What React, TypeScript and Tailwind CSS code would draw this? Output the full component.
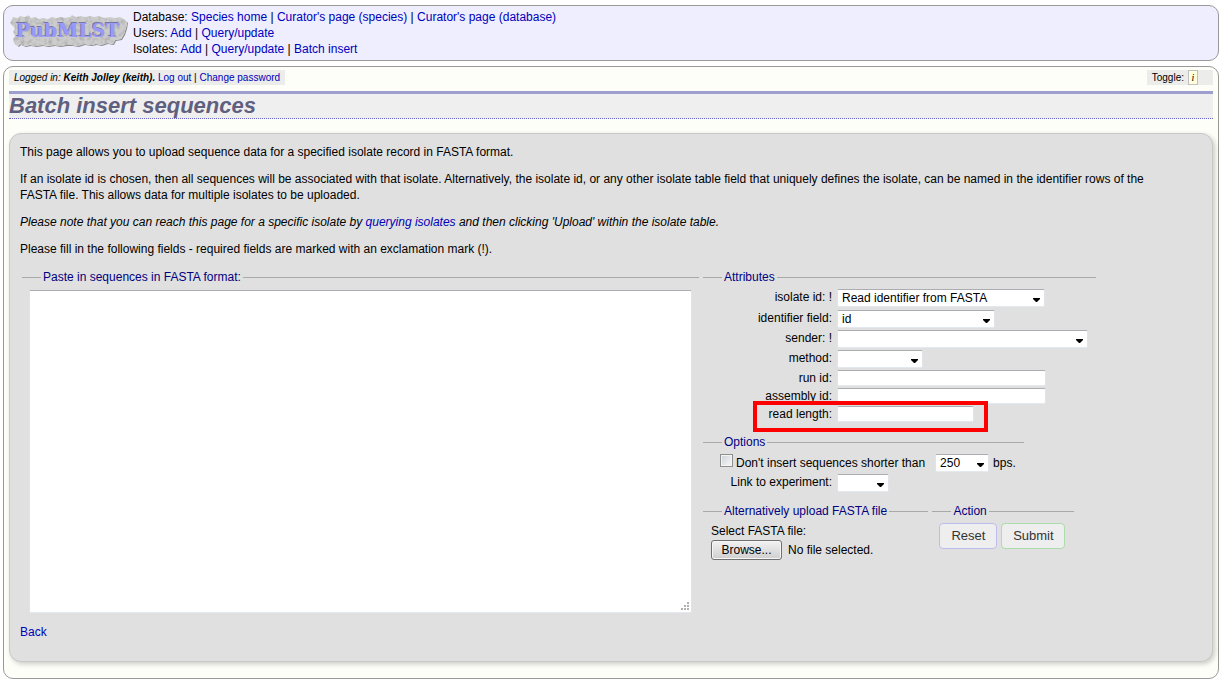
import { useRef } from "react";
import type { ReactNode } from "react";

function A({ children }: { children: ReactNode }) {
  return (
    <a href="#" className="text-[#0000bb] hover:underline">
      {children}
    </a>
  );
}

const stoneShape =
  "M1 10L4 4l5 1 2-2 5 1 3-2 2 3 5-1 4 2 4-1 5 1 4-2 4 1 5-1 4 1 5-1 2-2 4 2 5-1 4 1 5-1 4 1 5-1 5 2 6-1 5 1 5-1 4 2 3 3-1 6-2 6-3 5-6 1-2 4-6-1-6 2-5-1-5 1-7-1-6 2-6-1-6 0-6 1-6-1-6 1-6-1-6 1-6-1-5 1-5-2-2 2-4-3-1-4 2-3-2-4 2-4z";

function Logo() {
  return (
    <svg width="120" height="34" viewBox="0 0 120 34" role="img" aria-label="PubMLST" className="shrink-0">
      <defs>
        <filter id="stone" x="-5%" y="-10%" width="110%" height="120%" colorInterpolationFilters="sRGB">
          <feTurbulence type="fractalNoise" baseFrequency="0.25" numOctaves="2" seed="4" result="n" />
          <feColorMatrix in="n" type="matrix" values="0.35 0 0 0 0.8  0.35 0 0 0 0.8  0.35 0 0 0 0.8  0 0 0 0 1" result="g" />
          <feComposite in="g" in2="SourceGraphic" operator="in" result="t" />
          <feBlend in="t" in2="SourceGraphic" mode="multiply" />
        </filter>
      </defs>
      <path d={stoneShape} fill="#8c8c8c" transform="translate(1 1)" />
      <path d={stoneShape} fill="#cccccc" filter="url(#stone)" />
      <g fontFamily="'DejaVu Serif', serif" fontWeight="bold" fontSize="19">
        <text x="6" y="23" fill="#7777a0">PubMLST</text>
        <text x="7" y="24" fill="#9999f8">PubMLST</text>
      </g>
    </svg>
  );
}

const inset = "rounded-[2px] border border-t-[#abadb3] border-x-[#e2e3ea] border-b-[#e3e9ef] bg-white";

function Select({ id, label, width, options }: { id: string; label?: string; width: string; options: string[] }) {
  return (
    <span className={`relative inline-block h-[18px] ${width}`}>
      <select id={id} aria-label={label} className={`block h-full w-full appearance-none pl-1 pr-4 leading-4 ${inset}`}>
        {options.map((o) => (
          <option key={o}>{o}</option>
        ))}
      </select>
      <svg width="7" height="4" viewBox="0 0 7 4" className="pointer-events-none absolute bottom-[5px] right-[5px]" aria-hidden="true">
        <path d="M0 0h7v1L4 4H3L0 1z" fill="#000" />
      </svg>
    </span>
  );
}

function Fieldset({ title, children }: { title: string; children: ReactNode }) {
  return (
    <fieldset className="w-fit border-t border-[#a9a9a9]">
      <legend className="ml-[19px] px-0.5 leading-4 text-[#000080]">{title}</legend>
      {children}
    </fieldset>
  );
}

function Row({ id, label, children }: { id: string; label: string; children: ReactNode }) {
  return (
    <div className="flex gap-[5px]">
      <label htmlFor={id} className="w-[129px] shrink-0 text-right leading-4">
        {label}
      </label>
      {children}
    </div>
  );
}

export default function App() {
  const file = useRef<HTMLInputElement>(null);
  return (
    <div className="bg-white px-[3px] pb-px pt-[5px] font-['Liberation_Sans',Arial,sans-serif] text-[12px] leading-4 text-black">
      <header className="flex gap-1 rounded-[10px] border border-[#999999] bg-[#eeeeff] px-[5px] py-[3px]">
        <div className="pt-1">
          <Logo />
        </div>
        <nav>
          <div>
            Database: <A>Species home</A> | <A>Curator's page (species)</A> | <A>Curator's page (database)</A>
          </div>
          <div>
            Users: <A>Add</A> | <A>Query/update</A>
          </div>
          <div>
            Isolates: <A>Add</A> | <A>Query/update</A> | <A>Batch insert</A>
          </div>
        </nav>
      </header>

      <main className="mt-[5px] rounded-[10px] border border-[#999999] bg-[#fdfef8] px-[5px] pb-4 pt-[3px]">
        <div className="flex justify-between text-[10px] leading-[15px]">
          <div className="bg-[#ececea] px-[5px]">
            <i>
              Logged in: <b>Keith Jolley (keith).</b>
            </i>{" "}
            <A>Log out</A> | <A>Change password</A>
          </div>
          <div className="flex gap-1 bg-[#ececea] pl-[5px] pr-[15px]">
            Toggle:
            <button
              type="button"
              aria-label="Toggle information"
              className="h-[15px] w-[10px] border border-[#c0c0c0] bg-[#ffffdd] text-center font-['Liberation_Serif',serif] text-[10px] italic leading-3"
            >
              i
            </button>
          </div>
        </div>

        <h1 className="mt-[6px] border-t-[3px] border-b border-t-[#9f9fcf] border-b-[#6666cc] bg-[#efefef] text-[22px] font-bold italic leading-6 text-[#5f5f80] [border-bottom-style:dotted]">
          Batch insert sequences
        </h1>

        <section className="mt-[14px] rounded-[12px] border border-[#c8c8c8] bg-[#e0e0e0] px-[10px] pb-[21px] pt-[10px] shadow-[2px_2px_5px_rgba(0,0,0,0.2)]">
          <div className="flex flex-col gap-[11px] pr-7">
            <p>This page allows you to upload sequence data for a specified isolate record in FASTA format.</p>
            <p>
              If an isolate id is chosen, then all sequences will be associated with that isolate. Alternatively, the
              isolate id, or any other isolate table field that uniquely defines the isolate, can be named in the
              identifier rows of the FASTA file. This allows data for multiple isolates to be uploaded.
            </p>
            <p className="italic">
              Please note that you can reach this page for a specific isolate by <A>querying isolates</A> and then
              clicking 'Upload' within the isolate table.
            </p>
            <p>Please fill in the following fields - required fields are marked with an exclamation mark (!).</p>
          </div>

          <form className="ml-0.5 mt-3 flex items-start gap-1" onSubmit={(e) => e.preventDefault()}>
            <Fieldset title="Paste in sequences in FASTA format:">
              <div className="px-[7px] pt-[5px]">
                <div className="relative">
                  <textarea
                    aria-label="Paste in sequences in FASTA format"
                    className={`block h-[323px] w-[663px] resize-none ${inset}`}
                  />
                  <svg width="8" height="8" viewBox="0 0 8 8" className="pointer-events-none absolute bottom-[3px] right-[3px]" aria-hidden="true">
                    <path d="M6 0h2v2H6zM3 3h2v2H3zM6 3h2v2H6zM0 6h2v2H0zM3 6h2v2H3zM6 6h2v2H6z" fill="#b4b0ac" />
                  </svg>
                </div>
              </div>
            </Fieldset>

            <div>
              <Fieldset title="Attributes">
                <div className="flex flex-col gap-0.5 pr-2 pt-1">
                  <div className="pb-px">
                    <Row id="isolate" label="isolate id: !">
                      <Select id="isolate" width="w-[208px]" options={["Read identifier from FASTA"]} />
                    </Row>
                  </div>
                  <Row id="field" label="identifier field:">
                    <Select id="field" width="w-[158px]" options={["id"]} />
                  </Row>
                  <Row id="sender" label="sender: !">
                    <Select id="sender" width="w-[251px]" options={[""]} />
                  </Row>
                  <Row id="method" label="method:">
                    <Select id="method" width="w-[86px]" options={[""]} />
                  </Row>
                  <Row id="run" label="run id:">
                    <input id="run" type="text" className={`h-4 w-[209px] px-1 ${inset}`} />
                  </Row>
                  <Row id="assembly" label="assembly id:">
                    <input id="assembly" type="text" className={`h-4 w-[209px] px-1 ${inset}`} />
                  </Row>
                  <div className="relative">
                    <Row id="length" label="read length:">
                      <input id="length" type="text" className={`h-4 w-[137px] px-1 ${inset}`} />
                    </Row>
                    <div className="pointer-events-none absolute -top-[5px] left-[50px] h-[31px] w-[235px] border-4 border-[#ff0000]" />
                  </div>
                </div>
              </Fieldset>

              <div className="mt-3">
                <Fieldset title="Options">
                  <div className="flex items-center pl-[17px] pr-2 pt-1">
                    <input
                      id="short"
                      type="checkbox"
                      className="mb-[5px] mr-[3px] h-[13px] w-[13px] appearance-none border border-[#8e8f8f] bg-gradient-to-br from-[#cfd3d8] to-[#f8f8f8] shadow-[inset_0_0_0_1px_#f4f4f4]"
                    />
                    <label htmlFor="short" className="mr-[10px]">
                      Don't insert sequences shorter than
                    </label>
                    <Select id="bps" label="Minimum length" width="w-[54px]" options={["250"]} />
                    <span className="ml-1">bps.</span>
                  </div>
                  <div className="mt-0.5">
                    <Row id="experiment" label="Link to experiment:">
                      <Select id="experiment" width="w-[52px]" options={[""]} />
                    </Row>
                  </div>
                </Fieldset>
              </div>

              <div className="mt-[11px] flex items-start gap-1">
                <Fieldset title="Alternatively upload FASTA file">
                  <div className="pl-2 pr-[55px] pt-1">
                    <label htmlFor="upload" className="block">
                      Select FASTA file:
                    </label>
                    <input id="upload" ref={file} type="file" className="hidden" />
                    <div className="mt-px flex items-center gap-[6px] whitespace-nowrap">
                      <button
                        type="button"
                        onClick={() => file.current?.click()}
                        className="h-5 w-[71px] rounded-[3px] border border-[#707070] bg-gradient-to-b from-[#f2f2f2] to-[#cfcfcf] leading-4 shadow-[inset_0_0_0_1px_#f6f6f6]"
                      >
                        Browse...
                      </button>
                      <span>No file selected.</span>
                    </div>
                  </div>
                </Fieldset>
                <Fieldset title="Action">
                  <div className="flex gap-1 pl-[7px] pr-[9px] pt-1">
                    <button type="reset" className="h-[26px] w-[58px] rounded-[4px] border border-[#bbbbee] bg-[#eeeeee] text-[13px] text-[#333333]">
                      Reset
                    </button>
                    <button type="submit" className="h-[26px] w-[64px] rounded-[4px] border border-[#aaddaa] bg-[#eeeeee] text-[13px] text-[#333333]">
                      Submit
                    </button>
                  </div>
                </Fieldset>
              </div>
            </div>
          </form>

          <p className="mt-[11px]">
            <A>Back</A>
          </p>
        </section>
      </main>
    </div>
  );
}
